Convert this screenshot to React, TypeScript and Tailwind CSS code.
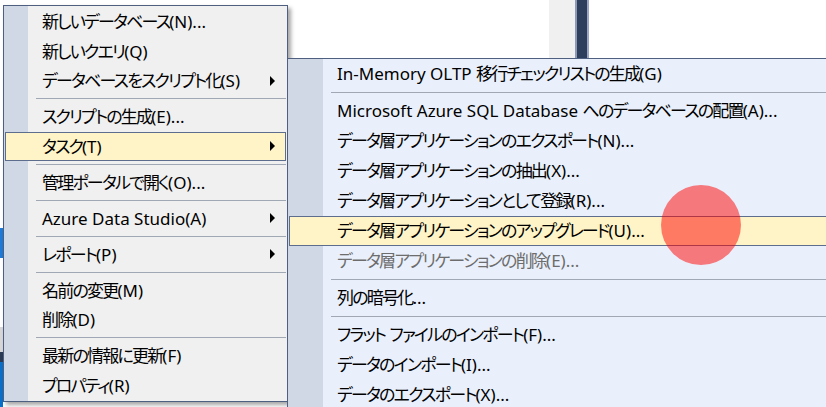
import React from "react";

type Item = { label?: string; sep?: boolean; arrow?: boolean; hl?: boolean; disabled?: boolean };

const leftItems: Item[] = [
  { label: "新しいデータベース(N)..." },
  { label: "新しいクエリ(Q)" },
  { label: "データベースをスクリプト化(S)", arrow: true },
  { sep: true },
  { label: "スクリプトの生成(E)..." },
  { label: "タスク(T)", arrow: true, hl: true },
  { sep: true },
  { label: "管理ポータルで開く(O)..." },
  { sep: true },
  { label: "Azure Data Studio(A)", arrow: true },
  { sep: true },
  { label: "レポート(P)", arrow: true },
  { sep: true },
  { label: "名前の変更(M)" },
  { label: "削除(D)" },
  { sep: true },
  { label: "最新の情報に更新(F)" },
  { label: "プロパティ(R)" },
];

const subItems: Item[] = [
  { label: "In-Memory OLTP 移行チェックリストの生成(G)" },
  { sep: true },
  { label: "Microsoft Azure SQL Database へのデータベースの配置(A)..." },
  { label: "データ層アプリケーションのエクスポート(N)..." },
  { label: "データ層アプリケーションの抽出(X)..." },
  { label: "データ層アプリケーションとして登録(R)..." },
  { label: "データ層アプリケーションのアップグレード(U)...", hl: true },
  { label: "データ層アプリケーションの削除(E)...", disabled: true },
  { sep: true },
  { label: "列の暗号化..." },
  { sep: true },
  { label: "フラット ファイルのインポート(F)..." },
  { label: "データのインポート(I)..." },
  { label: "データのエクスポート(X)..." },
];

const CJK = /([\u3000-\u30ff\u4e00-\u9fff\uff00-\uffef]+)/;

function Label({ text }: { text: string }) {
  const parts = text.split(CJK).filter((p) => p.length > 0);
  return (
    <>
      {parts.map((p, i) =>
        CJK.test(p) ? (
          <span key={i} className="tracking-[-1.8px]">
            {p}
          </span>
        ) : (
          <span key={i}>{p}</span>
        )
      )}
    </>
  );
}

function Arrow() {
  return (
    <svg width="6" height="10" viewBox="0 0 6 10" className="shrink-0">
      <polygon points="0,0 5,5 0,10" fill="#000" />
    </svg>
  );
}

function LeftMenu() {
  return (
    <div className="absolute left-[3px] top-[5px] w-[285px] h-[397px] border border-[#4e5f80] bg-[linear-gradient(to_right,#d0d7e5_24px,#f0f0f0_24px)] shadow-[3px_3px_4px_rgba(0,0,0,0.35)] pt-[1px] flex flex-col">
      {leftItems.map((it, i) =>
        it.sep ? (
          <div key={i} className="h-[6.5px] flex items-center pl-[32px] pr-[1px]">
            <div className="h-px w-full bg-[#a0a7b5]" />
          </div>
        ) : (
          <div
            key={i}
            className={`h-[29.5px] mx-[1px] border flex items-center pl-[36px] pr-[9px] ${
              it.hl ? "border-[#5d6d8d] bg-[#fff4c7]" : "border-transparent"
            }`}
          >
            <span className="flex-1 whitespace-nowrap text-black">
              <Label text={it.label!} />
            </span>
            {it.arrow && <Arrow />}
          </div>
        )
      )}
    </div>
  );
}

function SubMenu() {
  return (
    <div className="absolute left-[287px] top-[58px] w-[560px] h-[370px] border border-[#4e5f80] bg-[linear-gradient(to_right,#d0d7e5_35px,#eaf0fb_35px)] flex flex-col">
      {subItems.map((it, i) =>
        it.sep ? (
          <div key={i} className="h-[7px] flex items-center pl-[43px]">
            <div className="h-px w-full bg-[#a0a7b5]" />
          </div>
        ) : (
          <div
            key={i}
            className={`h-[30px] ml-[1px] border flex items-center pl-[47px] ${
              it.hl ? "border-[#5d6d8d] bg-[#fff4c7]" : "border-transparent"
            }`}
          >
            <span className={`whitespace-nowrap ${it.disabled ? "text-[#6d6d6d]" : "text-black"}`}>
              <Label text={it.label!} />
            </span>
          </div>
        )
      )}
    </div>
  );
}

export default function App() {
  return (
    <div className="relative w-[826px] h-[407px] overflow-hidden bg-white font-['Noto_Sans','Noto_Sans_CJK_JP',sans-serif] text-[17px] [font-feature-settings:'palt']">
      <div className="flex h-full">
        <div className="w-[3px] flex flex-col">
          <div className="h-[228px] bg-white" />
          <div className="h-[30px] bg-[#1e7ad6]" />
          <div className="h-[69px] bg-white" />
          <div className="h-[25px] bg-[#d6d6d6]" />
          <div className="h-[10px] bg-[#2b3b55]" />
          <div className="flex-1 bg-[#0a6fc8]" />
        </div>
        <div className="w-[546px] bg-white" />
        <div className="w-[26px] bg-[#f0f0f0]" />
        <div className="w-[2px] bg-[#8d9ab5]" />
        <div className="w-[10px] bg-[#2e3f5e]" />
        <div className="w-[2px] bg-[#9ba7c0]" />
        <div className="flex-1 bg-white" />
      </div>
      <LeftMenu />
      <SubMenu />
      <div className="absolute left-[661px] top-[185px] w-[80px] h-[80px] rounded-full bg-[rgba(255,0,0,0.5)]" />
    </div>
  );
}
